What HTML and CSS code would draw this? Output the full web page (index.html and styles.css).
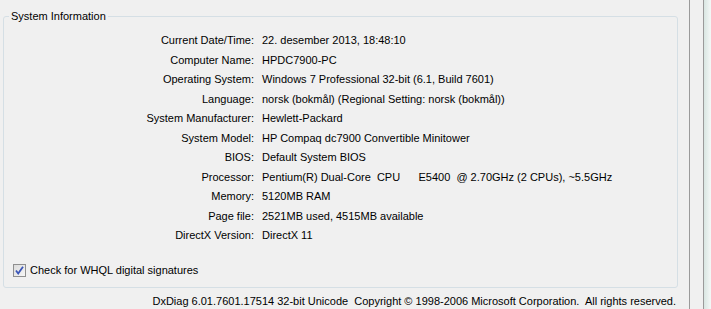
FILE: index.html
```html
<!DOCTYPE html>
<html lang="en">
  <head>
    <meta charset="UTF-8" />
    <meta name="viewport" content="width=device-width, initial-scale=1.0" />
    <title>DirectX Diagnostic Tool</title>
    <link rel="stylesheet" href="styles.css">
  </head>

  <body>
    <div class="window">
      <div class="page">
        <fieldset class="group">
          <legend>System Information</legend>

          <div class="info-grid">
            <div class="info-label">Current Date/Time:</div>
            <div class="info-value">22. desember 2013, 18:48:10</div>

            <div class="info-label">Computer Name:</div>
            <div class="info-value">HPDC7900-PC</div>

            <div class="info-label">Operating System:</div>
            <div class="info-value">Windows 7 Professional 32-bit (6.1, Build 7601)</div>

            <div class="info-label">Language:</div>
            <div class="info-value">norsk (bokmål) (Regional Setting: norsk (bokmål))</div>

            <div class="info-label">System Manufacturer:</div>
            <div class="info-value">Hewlett-Packard</div>

            <div class="info-label">System Model:</div>
            <div class="info-value">HP Compaq dc7900 Convertible Minitower</div>

            <div class="info-label">BIOS:</div>
            <div class="info-value">Default System BIOS</div>

            <div class="info-label">Processor:</div>
            <div class="info-value pre">Pentium(R) Dual-Core  CPU      E5400  @ 2.70GHz (2 CPUs), ~5.5GHz</div>

            <div class="info-label">Memory:</div>
            <div class="info-value">5120MB RAM</div>

            <div class="info-label">Page file:</div>
            <div class="info-value">2521MB used, 4515MB available</div>

            <div class="info-label">DirectX Version:</div>
            <div class="info-value">DirectX 11</div>
          </div>

          <label class="check-row">
            <span class="checkbox">
              <svg width="9" height="9" viewBox="0 0 9 9">
                <path d="M1 4.5 L3.2 7.5 L8 0.8" fill="none" stroke="#3b56b8" stroke-width="1.8" />
              </svg>
            </span>
            Check for WHQL digital signatures
          </label>
        </fieldset>

        <div class="footer pre">DxDiag 6.01.7601.17514 32-bit Unicode  Copyright © 1998-2006 Microsoft Corporation.  All rights reserved.</div>
      </div>

      <div class="frame-line"></div>
      <div class="frame-gap"></div>
      <div class="frame-line"></div>
      <div class="frame-edge"></div>
    </div>
  </body>
</html>
```

FILE: styles.css
```css
body {
  margin: 0;
  background-color: #f0f0f0;
  font-family: "Liberation Sans", Arial, sans-serif;
  font-size: 11px;
  color: #000;
  overflow: hidden;
}

.window {
  display: flex;
  height: 309px;
}

.page {
  width: 689px;
  flex: none;
}

.group {
  margin: 10px 0 0 3px;
  width: 675px;
  height: 278px;
  padding: 0;
  border: 1px solid #d5dfe5;
  border-radius: 3px;
  box-sizing: border-box;
}

.group legend {
  margin-left: 5px;
  padding: 0 2px 0 2px;
  line-height: 13px;
}

.info-grid {
  display: grid;
  grid-template-columns: 250px 1fr;
  column-gap: 8px;
  margin-top: 8px;
}

.info-label,
.info-value {
  line-height: 19.5px;
  white-space: nowrap;
}

.info-label {
  text-align: right;
}

.pre {
  white-space: pre;
}

.check-row {
  display: flex;
  align-items: center;
  gap: 4px;
  margin: 18px 0 0 9px;
  line-height: 13px;
}

.checkbox {
  width: 11px;
  height: 11px;
  border: 1px solid #8f8f8f;
  background: linear-gradient(135deg, #dcdcdc, #f6f6f6);
  display: flex;
  align-items: center;
  justify-content: center;
}

.footer {
  text-align: right;
  padding-right: 13px;
  margin-top: 7px;
  line-height: 13px;
}

.frame-line {
  width: 1px;
  background-color: #9a9a9a;
}

.frame-gap {
  width: 13px;
}

.frame-edge {
  flex: 1;
  background: linear-gradient(90deg, #d9e6e2, #f4f8f7);
}
```
